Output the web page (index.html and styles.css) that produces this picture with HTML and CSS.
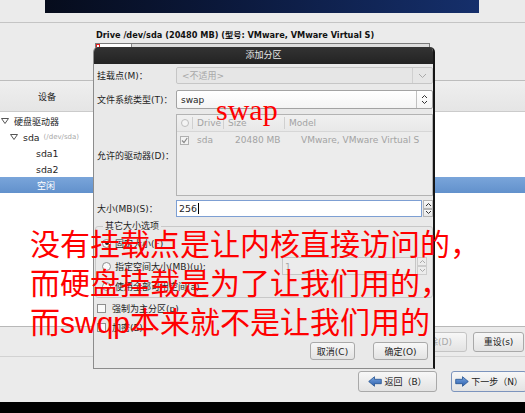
FILE: index.html
```html
<!DOCTYPE html>
<html lang="zh-CN">
<head>
<meta charset="utf-8">
<title>添加分区</title>
<link rel="stylesheet" href="styles.css">
</head>
<body>
<div class="screen">
  <header class="top"><div class="banner"></div></header>

  <section class="drive">
    <div class="drive-title">Drive /dev/sda (20480 MB) (型号: VMware, VMware Virtual S)</div>
    <div class="diskbar">
      <div class="seg-sel"></div>
      <div class="seg-used"></div>
      <div class="seg-free"></div>
    </div>
  </section>

  <section class="tree">
    <div class="tree-head"><div class="col-device">设备</div></div>
    <div class="tree-body">
      <div class="row lvl0"><svg class="exp" width="8" height="6" viewBox="0 0 8 6"><path d="M0.5 0.5H7.5L4 5.5Z" fill="#fff" stroke="#555"/></svg><span>硬盘驱动器</span></div>
      <div class="row lvl1"><svg class="exp" width="8" height="6" viewBox="0 0 8 6"><path d="M0.5 0.5H7.5L4 5.5Z" fill="#fff" stroke="#555"/></svg><span class="big">sda</span><span class="path">(/dev/sda)</span></div>
      <div class="row lvl2"><span class="big">sda1</span></div>
      <div class="row lvl2"><span class="big">sda2</span></div>
      <div class="row lvl2 sel"><span>空闲</span></div>
    </div>
  </section>

  <div class="actions">
    <button class="btn">创建(C)</button>
    <button class="btn">编辑(E)</button>
    <button class="btn dis">删除(D)</button>
    <button class="btn reset">重设(s)</button>
  </div>

  <div class="nav">
    <button class="btn navbtn back"><svg width="14" height="11" viewBox="0 0 14 11"><defs><linearGradient id="ga" x1="0" y1="0" x2="0" y2="1"><stop offset="0" stop-color="#7aa6e0"/><stop offset="1" stop-color="#2b5fae"/></linearGradient></defs><path d="M0.7 5.5L6.5 0.7V3.3H13.3V7.7H6.5V10.3Z" fill="url(#ga)" stroke="#24528f" stroke-width="0.8"/></svg><span>返回（B）</span></button>
    <button class="btn navbtn next"><svg width="14" height="11" viewBox="0 0 14 11"><defs><linearGradient id="gb" x1="0" y1="0" x2="0" y2="1"><stop offset="0" stop-color="#7aa6e0"/><stop offset="1" stop-color="#2b5fae"/></linearGradient></defs><path d="M13.3 5.5L7.5 0.7V3.3H0.7V7.7H7.5V10.3Z" fill="url(#gb)" stroke="#24528f" stroke-width="0.8"/></svg><span>下一步（N）</span></button>
  </div>

  <div class="blackbar"></div>
</div>

<div class="dialog">
  <div class="dlg-title">添加分区</div>
  <div class="dlg-body">
    <div class="frow r-mount">
      <label>挂载点(M)：</label>
      <div class="combo off">
        <span class="combo-text">&lt;不适用&gt;</span>
        <span class="combo-btn wide"><svg width="9" height="6" viewBox="0 0 9 6"><path d="M1 1L4.5 4.5L8 1" stroke="#aaa" fill="none"/></svg></span>
      </div>
    </div>
    <div class="frow r-fs">
      <label>文件系统类型(T)：</label>
      <div class="combo">
        <span class="combo-text">swap</span>
        <span class="combo-btn"><svg width="7" height="11" viewBox="0 0 7 11"><path d="M1 4L3.5 1.5L6 4M1 7L3.5 9.5L6 7" stroke="#333" fill="none"/></svg></span>
      </div>
    </div>
    <div class="frow r-drives">
      <label>允许的驱动器(D)：</label>
      <div class="listbox">
        <div class="lb-head">
          <span class="c0"><i class="hradio"></i></span>
          <span class="c1">Drive</span>
          <span class="c2">Size</span>
          <span class="c3">Model</span>
        </div>
        <div class="lb-row">
          <span class="c0"><i class="lcheck"><svg width="7" height="7" viewBox="0 0 7 7"><path d="M1 3.5L3 5.5L6.2 1" stroke="#8a8a8a" stroke-width="1.2" fill="none"/></svg></i></span>
          <span class="c1">sda</span>
          <span class="c2">20480 MB</span>
          <span class="c3">VMware, VMware Virtual S</span>
        </div>
      </div>
    </div>
    <div class="frow r-size">
      <label>大小(MB)(S)：</label>
      <div class="spin">
        <div class="spin-entry focus"><span>256</span><i class="caret"></i></div>
        <div class="spin-btns">
          <span><svg width="7" height="5" viewBox="0 0 7 5"><path d="M1 4L3.5 1.5L6 4" stroke="#333" fill="none"/></svg></span>
          <span><svg width="7" height="5" viewBox="0 0 7 5"><path d="M1 1L3.5 3.5L6 1" stroke="#333" fill="none"/></svg></span>
        </div>
      </div>
    </div>

    <fieldset class="sizeopts">
      <legend>其它大小选项</legend>
      <div class="opt o1"><i class="radio on"></i><span>固定大小(F)</span></div>
      <div class="opt o2"><i class="radio"></i><span>指定空间大小(MB)(u):</span>
        <div class="spin small off">
          <div class="spin-entry"><span>1</span></div>
          <div class="spin-btns">
            <span><svg width="7" height="5" viewBox="0 0 7 5"><path d="M1 4L3.5 1.5L6 4" stroke="#aaa" fill="none"/></svg></span>
            <span><svg width="7" height="5" viewBox="0 0 7 5"><path d="M1 1L3.5 3.5L6 1" stroke="#aaa" fill="none"/></svg></span>
          </div>
        </div>
      </div>
      <div class="opt o3"><i class="radio"></i><span>使用全部可用空间(a)</span></div>
    </fieldset>

    <div class="chk c-primary"><i class="box"></i><span>强制为主分区(p)</span></div>
    <div class="chk c-enc"><i class="box"></i><span>加密(E)</span></div>

    <div class="dlg-buttons">
      <button class="btn cancel">取消(C)</button>
      <button class="btn ok">确定(O)</button>
    </div>
  </div>
</div>

<div class="swap-note">swap</div>
<div class="annot">没有挂载点是让内核直接访问的，<br>而硬盘挂载是为了让我们用的，<br>而swqp本来就不是让我们用的</div>
</body>
</html>
```

FILE: styles.css
```css
* { box-sizing: border-box; }

body {
  margin: 0;
  width: 525px;
  height: 413px;
  overflow: hidden;
  position: relative;
  background: #ebebeb;
  font-family: "DejaVu Sans", "Noto Sans CJK SC", sans-serif;
  font-size: 9px;
  color: #1e1e1e;
}

.screen {
  display: flex;
  flex-direction: column;
  height: 413px;
}

/* top banner */
.top {
  flex: none;
  height: 23px;
  border-bottom: 1px solid #c4c4c4;
}
.banner {
  margin-left: 45px;
  width: 434px;
  height: 13px;
  background: linear-gradient(90deg, #060c1c 0%, #0b183a 40%, #152f6b 100%);
}

/* drive */
.drive {
  flex: none;
  height: 57px;
  padding: 7px 0 0 95px;
}
.drive-title {
  margin-left: 1px;
  font-weight: bold;
  font-size: 8.2px;
  line-height: 11px;
  white-space: nowrap;
  color: #111;
}
.diskbar {
  margin-top: 2px;
  width: 335px;
  height: 30px;
  border: 1px solid #7a7a7a;
  display: flex;
  background: #dedede;
}
.seg-sel { width: 4px; border: 1px solid #e02020; background: #fff; }
.seg-used { width: 32px; background: #fff; border-right: 1px solid #8a8a8a; }
.seg-free { flex: 1; }

/* tree */
.tree { flex: none; display: flex; flex-direction: column; }
.tree-head {
  height: 32px;
  border-top: 1px solid #bdbdbd;
  border-bottom: 1px solid #cbcbcb;
  background: linear-gradient(#efefef, #e5e5e5);
  display: flex;
  align-items: center;
}
.col-device { width: 94px; text-align: center; }
.tree-body {
  height: 215px;
  background: #fff;
  border-bottom: 1px solid #b8b8b8;
  padding-top: 1px;
}
.row {
  height: 16px;
  display: flex;
  align-items: center;
  white-space: nowrap;
}
.row .exp { flex: none; margin-right: 5px; }
.lvl0 { padding-left: 1px; }
.lvl1 { padding-left: 10px; }
.lvl2 { padding-left: 36px; }
.big { font-size: 9.4px; }
.path { font-size: 7px; color: #a8a8a8; margin-left: 4px; }
.row.sel {
  background: linear-gradient(#7aa5da, #6291cc);
  color: #fff;
  padding-left: 37px;
}

/* buttons */
.btn {
  font: inherit;
  color: #222;
  height: 20px;
  padding: 0 8px;
  border: 1px solid #a9a9a9;
  border-radius: 3px;
  background: linear-gradient(#f7f7f7, #e3e3e3);
  white-space: nowrap;
  flex: none;
}
.btn.dis { color: #a9a9a9; border-color: #c4c4c4; width: 62px; }
.btn.reset { width: 51px; padding: 0; }

.actions {
  flex: none;
  height: 30px;
  border-bottom: 1px solid #d2d2d2;
  display: flex;
  justify-content: flex-end;
  align-items: center;
  gap: 6px;
  padding-right: 1px;
}

.nav {
  flex: none;
  height: 45px;
  padding: 14px 0 0 358px;
  display: flex;
  gap: 14px;
  overflow: hidden;
}
.navbtn {
  height: 21px;
  width: 79px;
  padding: 0;
  display: flex;
  align-items: center;
  justify-content: center;
  gap: 2px;
}
.navbtn.next { width: 76px; border-color: #7c94bd; }

.blackbar { flex: none; height: 11px; background: #000; }

/* dialog */
.dialog {
  position: absolute;
  left: 93px;
  top: 47px;
  width: 342px;
  height: 322px;
  background: #e9e9e9;
  border-left: 1px solid #8c8c8c;
  border-bottom: 1px solid #8c8c8c;
  border-right: 2px solid #151515;
  border-radius: 5px 5px 0 0;
  overflow: hidden;
}
.dlg-title {
  height: 17px;
  background: linear-gradient(#333, #232323);
  color: #e8e8e8;
  text-align: center;
  line-height: 17px;
  font-size: 9px;
}
.dlg-body {
  padding: 0 0 0 3px;
  display: flex;
  flex-direction: column;
}
.frow { display: flex; align-items: center; }
.frow label { width: 79px; flex: none; white-space: nowrap; }
.r-mount { margin-top: 3px; height: 17px; }
.r-fs { margin-top: 6px; height: 19px; }
.r-drives { margin-top: 5px; height: 82px; }
.r-size { margin-top: 4px; height: 17px; }

.combo {
  flex: 1;
  height: 100%;
  display: flex;
  align-items: center;
  border: 1px solid #a3a3a3;
  border-radius: 2px;
  background: linear-gradient(#ffffff, #f4f4f4);
}
.combo.off { background: #e6e6e6; border-color: #c6c6c6; color: #a8a8a8; }
.combo-text { flex: 1; padding-left: 4px; }
.combo.off .combo-text { padding-left: 5px; }
.combo-btn {
  width: 16px;
  height: 100%;
  border-left: 1px solid #c0c0c0;
  display: flex;
  align-items: center;
  justify-content: center;
}
.combo-btn.wide { width: 20px; border-left-color: #d0d0d0; }

.listbox {
  flex: 1;
  height: 100%;
  border: 1px solid #b3b3b3;
  background: #ececec;
  color: #a3a3a3;
}
.lb-head, .lb-row { display: flex; align-items: center; }
.lb-head {
  height: 17px;
  background: linear-gradient(#f0f0f0, #e8e8e8);
  border-bottom: 1px solid #d6d6d6;
}
.lb-row { height: 16px; }
.c0 { width: 15px; display: flex; justify-content: center; }
.c1 { width: 31px; padding-left: 4px; }
.c2 { width: 61px; padding-left: 4px; }
.c3 { flex: 1; padding-left: 4px; white-space: nowrap; }
.lb-head .c1, .lb-head .c2, .lb-head .c3 { border-left: 1px solid #d0d0d0; line-height: 12px; }
.lb-row .c1 { border-left: 1px solid transparent; }
.lb-row .c2 { padding-left: 12px; }
.lb-row .c3 { padding-left: 17px; }
.hradio {
  width: 8px; height: 8px;
  border: 1px solid #bdbdbd;
  border-radius: 50%;
  background: #f4f4f4;
}
.lcheck {
  width: 9px; height: 9px;
  border: 1px solid #b0b0b0;
  background: #f2f2f2;
  display: flex;
  align-items: center;
  justify-content: center;
}

.spin { flex: 1; height: 100%; display: flex; }
.spin-entry {
  flex: 1;
  display: flex;
  align-items: center;
  padding-left: 2px;
  background: #fff;
  border: 1px solid #a8a8a8;
  font-size: 9.4px;
}
.spin-entry.focus { border-color: #7d9fd3; }
.caret { width: 1px; height: 11px; background: #000; margin-left: 1px; }
.spin-btns {
  width: 10px;
  margin-left: 1px;
  display: flex;
  flex-direction: column;
}
.spin-btns span {
  flex: 1;
  border: 1px solid #b5b5b5;
  background: linear-gradient(#fafafa, #e6e6e6);
  display: flex;
  align-items: center;
  justify-content: center;
}

.sizeopts {
  margin: 4px 0 0 -2px;
  padding: 0 0 3px 6px;
  border: 1px solid #c8c8c8;
  border-radius: 3px;
  min-width: 0;
}
.sizeopts legend {
  padding: 0 2px;
  margin-left: 1px;
  line-height: 10px;
}
.opt { display: flex; align-items: center; white-space: nowrap; }
.opt .radio { margin-right: 4px; }
.o1 { height: 16px; margin-top: 4px; }
.o2 { height: 20px; margin-top: 5px; }
.o3 { height: 16px; margin-top: 2px; }
.radio {
  flex: none;
  width: 9px; height: 9px;
  border: 1px solid #8e8e8e;
  border-radius: 50%;
  background: #fafafa;
  display: flex;
  align-items: center;
  justify-content: center;
}
.radio.on::after {
  content: "";
  width: 4px; height: 4px;
  border-radius: 50%;
  background: #222;
}
.spin.small {
  flex: none;
  width: 145px;
  height: 18px;
  margin-left: auto;
  margin-right: 5px;
}
.spin.off .spin-entry { background: #ececec; border-color: #c6c6c6; color: #aaa; }
.spin.off .spin-btns span { border-color: #cccccc; background: #ececec; }

.chk { display: flex; align-items: center; height: 14px; white-space: nowrap; }
.chk .box {
  width: 9px; height: 9px;
  border: 1px solid #8e8e8e;
  background: #fafafa;
  margin-right: 6px;
}
.c-primary { margin-top: 3px; }
.c-enc { margin-top: 5px; }

.dlg-buttons {
  margin-top: 8px;
  display: flex;
  justify-content: flex-end;
  gap: 18px;
  padding-right: 5px;
}
.dlg-buttons .btn { height: 18px; padding: 0; }
.cancel { width: 45px; }
.ok { width: 55px; }

/* annotations */
.swap-note {
  position: absolute;
  left: 216px;
  top: 95px;
  font-family: "Liberation Serif", serif;
  font-size: 30px;
  line-height: 30px;
  color: #ff0000;
}
.annot {
  position: absolute;
  left: 30px;
  top: 225px;
  font-family: "Liberation Sans", "Noto Sans CJK SC", sans-serif;
  font-size: 30px;
  line-height: 39px;
  color: #ff0000;
  white-space: nowrap;
}
```
